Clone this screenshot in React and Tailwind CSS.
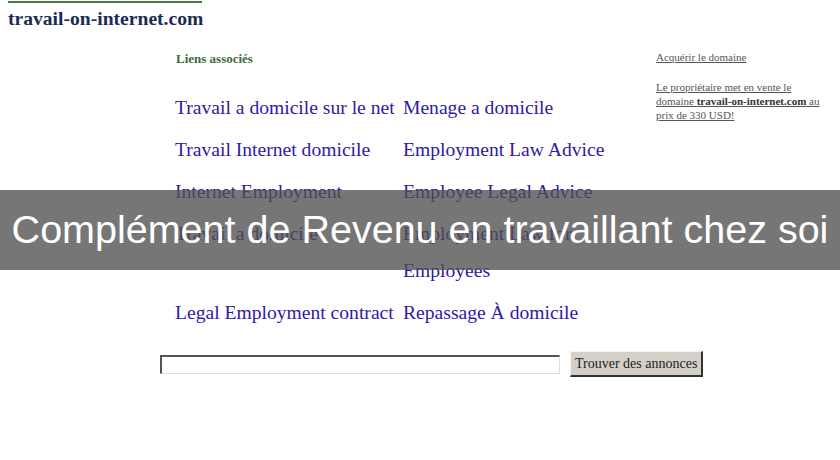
export default function App() {
  const rows = [
    ["Travail a domicile sur le net", "Menage a domicile"],
    ["Travail Internet domicile", "Employment Law Advice"],
    ["Internet Employment", "Employee Legal Advice"],
    ["Travail a domicile", "Employment Law for Employees"],
    ["Legal Employment contract", "Repassage À domicile"],
  ];
  return (
    <div className="relative w-[840px] h-[460px] bg-white overflow-hidden" style={{ fontFamily: '"Liberation Serif", "DejaVu Serif", serif' }}>
      <div className="pl-2">
        <div className="w-[194px] h-[2px] bg-[#4d7a4d] mt-[1px]"></div>
        <div className="text-[19.6px] font-bold text-[#1c2a55] leading-[22px] mt-[5px]">travail-on-internet.com</div>
      </div>
      <div className="flex">
        <div className="w-[160px] shrink-0"></div>
        <div className="w-[496px] shrink-0">
          <div className="pl-[16px] pt-[21px] text-[13px] font-bold text-[#3d6b3d] leading-[16px]">Liens associés</div>
          <div className="pl-[15px] pt-[22px] grid grid-cols-[228px_215px] gap-y-[5px] text-[19.6px] leading-[37px] text-[#2f1aa6]">
            {rows.map((r, i) => [
              <div key={"a" + i}>{r[0]}</div>,
              <div key={"b" + i}>{r[1]}</div>,
            ])}
          </div>
          <div className="flex items-center mt-[20px]">
            <input className="w-[400px] shrink-0 h-[19px] border-t-2 border-l-2 border-b border-r border-t-[#555] border-l-[#555] border-b-[#ddd] border-r-[#ddd] bg-white" />
            <button className="ml-[10px] shrink-0 whitespace-nowrap h-[26px] px-[4px] bg-[#d4d0c8] text-[14px] text-[#222] border-t border-l border-b-2 border-r-2 border-t-[#f4f4f4] border-l-[#f4f4f4] border-b-[#333] border-r-[#333]" style={{ fontFamily: '"Liberation Serif", serif' }}>Trouver des annonces</button>
          </div>
        </div>
        <div className="w-[184px] shrink-0 pt-[20px] text-[11px] text-[#555] leading-[14px]">
          <div className="underline">Acquérir le domaine</div>
          <div className="underline mt-[16px] whitespace-nowrap">
            Le propriétaire met en vente le<br />domaine <b className="text-[#333]">travail-on-internet.com</b> au<br />prix de 330 USD!
          </div>
        </div>
      </div>
      <div className="absolute left-0 top-[190px] w-[840px] h-[80px] bg-[rgba(80,80,80,0.78)] flex items-center justify-center">
        <span className="text-white text-[39.5px] leading-none whitespace-nowrap" style={{ fontFamily: '"Liberation Sans", Arial, sans-serif' }}>Complément de Revenu en travaillant chez soi</span>
      </div>
    </div>
  );
}
